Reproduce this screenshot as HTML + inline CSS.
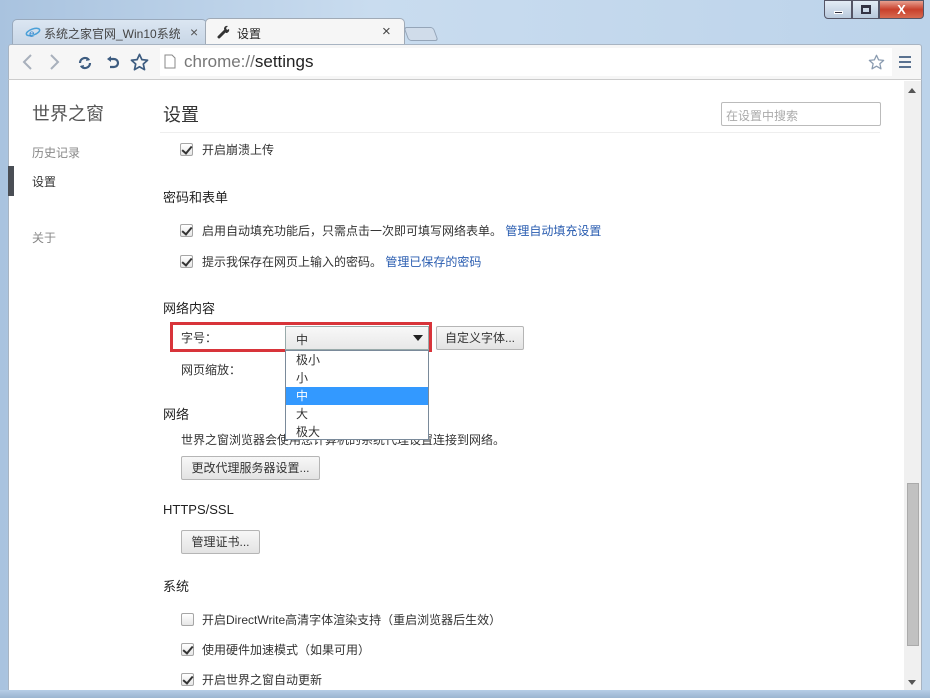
<!DOCTYPE html>
<html><head><meta charset="utf-8"><style>
*{margin:0;padding:0;box-sizing:border-box}
body{width:930px;height:698px;overflow:hidden;position:relative;font-family:"Liberation Sans","Noto Sans CJK SC",sans-serif;font-size:12px;color:#333;background:linear-gradient(90deg,#a9c3df,#c9dcef 40%,#bcd3ea);}
.a{position:absolute;white-space:nowrap}
.cb{position:absolute;width:13px;height:13px;border:1px solid #a6a6a6;background:linear-gradient(#fff,#e6e6e6);border-radius:2px}
.cb.on::after{content:"";position:absolute;left:3px;top:0px;width:4px;height:8px;border:solid #333;border-width:0 2px 2px 0;transform:rotate(40deg)}
.btn{position:absolute;height:24px;border:1px solid #b5b5b5;border-radius:2px;background:linear-gradient(#f7f7f7,#e3e3e3);font-size:12px;line-height:22px;text-align:center;color:#333}
.h{font-size:13px;color:#222}
a{color:#2a5db0;text-decoration:none}
</style></head><body>
<div class="a" style="left:824px;top:0;width:28px;height:19px;border:1px solid #556;border-radius:0 0 0 4px;background:linear-gradient(#e3ecf6,#b8c9dc)"><div style="position:absolute;left:9px;top:10px;width:9px;height:3px;background:#334;border:1px solid #fff"></div></div>
<div class="a" style="left:852px;top:0;width:27px;height:19px;border:1px solid #556;background:linear-gradient(#e3ecf6,#b8c9dc)"><div style="position:absolute;left:8px;top:4px;width:10px;height:9px;border:2px solid #334;border-top-width:3px"></div></div>
<div class="a" style="left:879px;top:0;width:45px;height:19px;border:1px solid #556;border-radius:0 0 4px 0;background:linear-gradient(#e8a090,#c8402c 50%,#d86a50);color:#fff;font-weight:bold;font-size:13px;text-align:center;line-height:17px">X</div>
<div class="a" style="left:12px;top:19px;width:195px;height:26px;background:linear-gradient(#dbe6f2,#c8d6e6);border:1px solid #99a9bc;border-bottom:none;border-radius:5px 5px 0 0"></div>
<svg class="a" style="left:25px;top:25px" width="16" height="14" viewBox="0 0 16 14"><ellipse cx="8" cy="7" rx="7" ry="3" fill="none" stroke="#4aa0d8" stroke-width="1.5" transform="rotate(-20 8 7)"/><text x="4" y="12" font-size="12" font-family="Liberation Serif" fill="#3a8ad0">e</text></svg>
<div class="a" style="left:44px;top:25px;font-size:12px;color:#444;width:136px;overflow:hidden">系统之家官网_Win10系统</div>
<div class="a" style="left:190px;top:24px;font-size:14px;color:#555">×</div>
<div class="a" style="left:205px;top:18px;width:200px;height:27px;background:#f6f6f6;border:1px solid #a0aab6;border-bottom:none;border-radius:5px 5px 0 0"></div>
<svg class="a" style="left:217px;top:25px" width="14" height="14" viewBox="0 0 14 14"><path d="M2 12L8 6" stroke="#333" stroke-width="3" stroke-linecap="round"/><path d="M7 4a3 3 0 0 1 4-3l-2 2 1 2 2-1a3 3 0 0 1-3 4z" fill="#333"/></svg>
<div class="a" style="left:237px;top:25px;font-size:12px;color:#222">设置</div>
<div class="a" style="left:382px;top:23px;font-size:15px;color:#444">×</div>
<div class="a" style="left:406px;top:27px;width:30px;height:14px;border:1px solid #95a5b8;border-radius:3px;background:#d0dcea;transform:skewX(20deg)"></div>
<div class="a" style="left:8px;top:44px;width:914px;height:36px;background:#f6f6f6;border:1px solid #a8b4c2;border-bottom:1px solid #ccc;border-radius:3px 3px 0 0"></div>
<svg class="a" style="left:20px;top:53px" width="14" height="18"><path d="M11 2L4 9l7 7" stroke="#a8b0bc" stroke-width="2" fill="none"/></svg>
<svg class="a" style="left:48px;top:53px" width="14" height="18"><path d="M3 2l7 7-7 7" stroke="#a8b0bc" stroke-width="2" fill="none"/></svg>
<svg class="a" style="left:76px;top:54px" width="18" height="18" viewBox="0 0 18 18"><path d="M4 9a5 5 0 0 1 9-3M14 9a5 5 0 0 1-9 3" stroke="#3d5c80" stroke-width="2.2" fill="none"/><path d="M11 3l3 3-4 1z M7 15l-3-3 4-1z" fill="#3d5c80"/></svg>
<svg class="a" style="left:104px;top:54px" width="18" height="18" viewBox="0 0 18 18"><path d="M5 5h5a4 4 0 0 1 0 8H6" stroke="#3d5c80" stroke-width="2.2" fill="none"/><path d="M3 5l4-3v6z" fill="#3d5c80"/></svg>
<svg class="a" style="left:130px;top:53px" width="19" height="18" viewBox="0 0 20 19"><path d="M10 1.5l2.5 5.5 6 .6-4.5 4 1.3 6-5.3-3.1-5.3 3.1 1.3-6-4.5-4 6-.6z" fill="none" stroke="#3d5c80" stroke-width="1.8" stroke-linejoin="round"/></svg>
<div class="a" style="left:160px;top:48px;width:732px;height:28px;background:#fff"></div>
<svg class="a" style="left:164px;top:54px" width="12" height="15"><path d="M1 1h7l3 3v10H1z" fill="#fff" stroke="#888"/></svg>
<div class="a" style="left:184px;top:52px;font-size:17px;color:#777">chrome://<span style="color:#222">settings</span></div>
<svg class="a" style="left:868px;top:54px" width="17" height="16" viewBox="0 0 20 19"><path d="M10 1.5l2.5 5.5 6 .6-4.5 4 1.3 6-5.3-3.1-5.3 3.1 1.3-6-4.5-4 6-.6z" fill="none" stroke="#8a9bb0" stroke-width="1.5" stroke-linejoin="round"/></svg>
<div class="a" style="left:899px;top:56px;width:12px;height:12px;border-top:2px solid #5a7290;border-bottom:2px solid #5a7290"><div style="margin-top:3px;height:2px;background:#5a7290"></div></div>
<div class="a" style="left:8px;top:80px;width:914px;height:610px;background:#fff;border-left:1px solid #a8b4c2;border-right:1px solid #a8b4c2"></div>
<div class="a" style="left:8px;top:166px;width:6px;height:30px;background:#4a4e55"></div>
<div class="a" style="left:32px;top:100px;font-size:18px;color:#555">世界之窗</div>
<div class="a" style="left:32px;top:144px;font-size:12px;color:#888">历史记录</div>
<div class="a" style="left:32px;top:173px;font-size:12px;color:#333">设置</div>
<div class="a" style="left:32px;top:229px;font-size:12px;color:#888">关于</div>
<div class="a" style="left:163px;top:101px;font-size:18px;color:#333">设置</div>
<div class="a" style="left:160px;top:132px;width:720px;height:1px;background:#eee"></div>
<div class="a" style="left:721px;top:102px;width:160px;height:24px;border:1px solid #bbb;border-radius:2px;color:#aaa;font-size:12px;padding:4px 4px">在设置中搜索</div>
<div class="cb on" style="left:180px;top:143px"></div><div class="a" style="left:202px;top:141px">开启崩溃上传</div>
<div class="a h" style="left:163px;top:187px">密码和表单</div>
<div class="cb on" style="left:180px;top:224px"></div><div class="a" style="left:202px;top:222px">启用自动填充功能后，只需点击一次即可填写网络表单。 <a>管理自动填充设置</a></div>
<div class="cb on" style="left:180px;top:255px"></div><div class="a" style="left:202px;top:253px">提示我保存在网页上输入的密码。 <a>管理已保存的密码</a></div>
<div class="a h" style="left:163px;top:298px">网络内容</div>
<div class="a" style="left:170px;top:322px;width:262px;height:30px;border:3px solid #d8343a"></div>
<div class="a" style="left:181px;top:329px">字号：</div>
<div class="a" style="left:285px;top:326px;width:144px;height:24px;border:1px solid #9aa;background:linear-gradient(#f8f8f8,#e8e8e8);padding:4px 10px">中</div>
<div class="a" style="left:413px;top:335px;border:5px solid transparent;border-top:6px solid #222;border-bottom:0"></div>
<div class="btn" style="left:436px;top:326px;width:88px">自定义字体...</div>
<div class="a" style="left:181px;top:361px">网页缩放：</div>
<div class="a h" style="left:163px;top:404px">网络</div>
<div class="a" style="left:181px;top:431px">世界之窗浏览器会使用您计算机的系统代理设置连接到网络。</div>
<div class="btn" style="left:181px;top:456px;width:139px">更改代理服务器设置...</div>
<div class="a" style="left:285px;top:350px;width:144px;height:90px;background:#fff;border:1px solid #7a8a9a;font-size:12px;line-height:18px">
<div style="padding-left:10px">极小</div><div style="padding-left:10px">小</div><div style="padding-left:10px;background:#3399ff;color:#fff">中</div><div style="padding-left:10px">大</div><div style="padding-left:10px">极大</div></div>
<div class="a h" style="left:163px;top:502px">HTTPS/SSL</div>
<div class="btn" style="left:181px;top:530px;width:79px">管理证书...</div>
<div class="a h" style="left:163px;top:576px">系统</div>
<div class="cb" style="left:181px;top:613px"></div><div class="a" style="left:202px;top:611px">开启DirectWrite高清字体渲染支持（重启浏览器后生效）</div>
<div class="cb on" style="left:181px;top:643px"></div><div class="a" style="left:202px;top:641px">使用硬件加速模式（如果可用）</div>
<div class="cb on" style="left:181px;top:673px"></div><div class="a" style="left:202px;top:671px">开启世界之窗自动更新</div>
<div class="a" style="left:904px;top:81px;width:17px;height:609px;background:#f0f0f0"></div>
<div class="a" style="left:908px;top:88px;border:4px solid transparent;border-bottom:5px solid #555;border-top:0"></div>
<div class="a" style="left:907px;top:483px;width:12px;height:163px;background:#c1c1c1;border:1px solid #aaa"></div>
<div class="a" style="left:908px;top:680px;border:4px solid transparent;border-top:5px solid #555;border-bottom:0"></div>
<div class="a" style="left:0;top:690px;width:930px;height:8px;background:linear-gradient(#b6cde6,#9ab4d0)"></div>
</body></html>
